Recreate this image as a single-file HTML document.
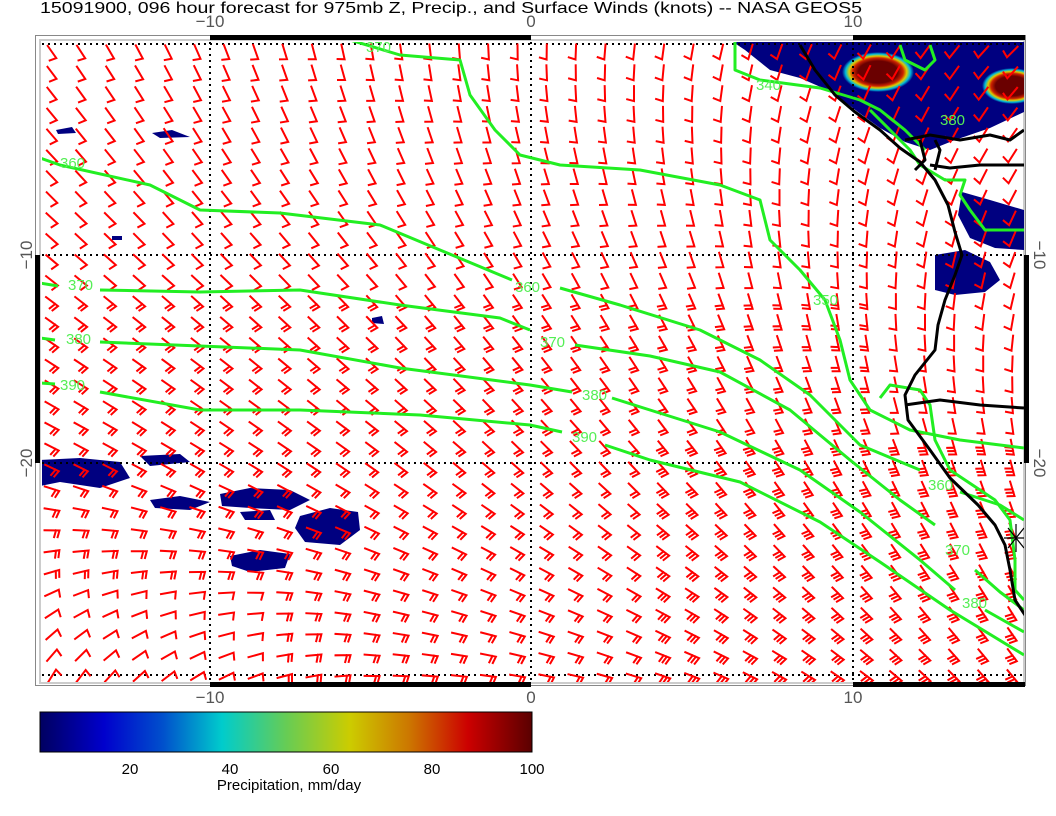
<!DOCTYPE html>
<html><head><meta charset="utf-8"><style>
html,body{margin:0;padding:0;background:#fff;width:1056px;height:816px;overflow:hidden}
svg{position:absolute;left:0;top:0}
text{font-family:"Liberation Sans",sans-serif}
</style></head><body>
<svg id="s" width="1056" height="816" viewBox="0 0 1056 816" xmlns="http://www.w3.org/2000/svg">
<defs>
<linearGradient id="cb" x1="0" x2="1" y1="0" y2="0">
<stop offset="0" stop-color="#000060"/>
<stop offset="0.13" stop-color="#0000cc"/>
<stop offset="0.25" stop-color="#0050cc"/>
<stop offset="0.37" stop-color="#00cccc"/>
<stop offset="0.50" stop-color="#66cc55"/>
<stop offset="0.63" stop-color="#cccc00"/>
<stop offset="0.75" stop-color="#cc7700"/>
<stop offset="0.87" stop-color="#cc0000"/>
<stop offset="1" stop-color="#5a0000"/>
</linearGradient>
<radialGradient id="hot" cx="0.5" cy="0.5" r="0.5">
<stop offset="0.55" stop-color="#6a0000"/>
<stop offset="0.7" stop-color="#cc2200"/>
<stop offset="0.8" stop-color="#ddcc00"/>
<stop offset="0.9" stop-color="#00bbdd"/>
<stop offset="1" stop-color="#000080"/>
</radialGradient>
<clipPath id="map"><rect x="42" y="42" width="982" height="640"/></clipPath>
</defs>
<text x="40" y="13" font-size="16" fill="#000" textLength="822" lengthAdjust="spacingAndGlyphs">15091900, 096 hour forecast for 975mb Z, Precip., and Surface Winds (knots) -- NASA GEOS5</text>

<rect x="35.5" y="35.5" width="990" height="650" fill="none" stroke="#888" stroke-width="1"/>
<rect x="40" y="40" width="984" height="643" fill="none" stroke="#ccc" stroke-width="2"/>

<g clip-path="url(#map)">
<g fill="#000080">
<path d="M730,40 L1024,40 L1024,112 L990,128 L955,140 L930,150 L905,142 L880,128 L858,112 L832,92 L800,78 L770,70 L745,50 Z"/>
<path d="M962,192 L990,200 L1024,210 L1024,250 L995,248 L970,238 L958,215 Z"/>
<path d="M935,255 L965,250 L990,262 L1000,280 L985,292 L955,295 L935,290 Z"/>
<path d="M40,460 L80,458 L120,462 L130,478 L100,488 L60,482 L40,486 Z"/>
<path d="M140,456 L180,454 L190,462 L150,466 Z"/>
<path d="M220,494 L250,488 L290,490 L310,500 L290,510 L250,508 L222,506 Z"/>
<path d="M300,516 L330,508 L358,512 L360,530 L340,545 L305,542 L295,528 Z"/>
<path d="M230,556 L260,550 L290,554 L285,568 L250,572 L232,566 Z"/>
<path d="M150,500 L180,496 L210,502 L190,510 L155,508 Z"/>
<path d="M240,512 L270,510 L275,520 L245,520 Z"/>
<path d="M56,130 L72,127 L76,133 L58,134 Z"/>
<path d="M152,133 L172,130 L190,137 L160,138 Z"/>
<path d="M372,318 L382,316 L384,324 L372,323 Z"/>
<path d="M112,236 L122,236 L122,240 L112,240 Z"/>
</g>
<ellipse cx="878" cy="72" rx="36" ry="20" fill="url(#hot)"/>
<ellipse cx="1012" cy="86" rx="30" ry="18" fill="url(#hot)"/>

<g stroke="#000" stroke-width="2" stroke-dasharray="2,4" fill="none">
<line x1="42" y1="44" x2="1024" y2="44"/>
<line x1="42" y1="255" x2="1024" y2="255"/>
<line x1="42" y1="463" x2="1024" y2="463"/>
<line x1="42" y1="675" x2="1024" y2="675"/>
<line x1="210" y1="42" x2="210" y2="682"/>
<line x1="531" y1="42" x2="531" y2="682"/>
<line x1="853" y1="42" x2="853" y2="682"/>
</g>

<g id="barbs" stroke="#ff0000" stroke-width="2" fill="none" stroke-linecap="square"></g>

<g stroke="#22ee22" stroke-width="3" fill="none" stroke-linejoin="round">
<polyline points="40,158 60,165 150,185 200,210 280,213 380,225 440,250 500,275 512,280"/>
<polyline points="560,288 620,305 700,330 760,360 810,395 860,445 920,470"/>
<polyline points="960,492 1000,505 1024,520"/>
<polyline points="40,283 58,286"/><polyline points="100,290 200,292 300,290 400,305 500,318 530,330"/>
<polyline points="575,345 650,356 720,372 790,410 850,460 900,500 935,525"/>
<polyline points="975,570 1000,592 1024,610"/>
<polyline points="40,338 55,340"/><polyline points="100,342 200,346 300,350 400,368 530,385 572,392"/>
<polyline points="612,398 650,410 720,432 800,470 860,512 920,560 955,590"/>
<polyline points="985,610 1024,632"/>
<polyline points="40,383 55,384"/><polyline points="100,392 200,410 300,410 420,415 530,425 562,432"/>
<polyline points="605,445 650,460 740,482 820,522 880,562 950,610 1024,655"/>
<polyline points="350,40 400,55 460,60 470,95 495,130 520,155 560,165 640,170 720,185 760,200 770,240 800,270 825,300 840,340 850,380 870,410 910,430 960,440 1000,445 1024,448"/>
<polyline points="735,40 735,70 760,80 790,84 820,88 860,100 880,110 905,130 925,150"/>
<polyline points="900,45 905,60 925,70 935,60 930,45"/>
<polyline points="870,110 890,130 910,150 920,165 945,180 965,180 960,195 970,210 985,230 1024,230"/>
<polyline points="880,398 890,385 920,390 930,405 935,440 950,470 980,490 995,500 1010,520 1015,560 1015,590 1024,600"/>
</g>
<g fill="#55ee55" font-size="15">
<text x="366" y="52">370</text>
<text x="756" y="90">340</text>
<text x="940" y="125">380</text>
<text x="60" y="168">360</text>
<text x="515" y="292">360</text>
<text x="68" y="290">370</text>
<text x="540" y="347">370</text>
<text x="66" y="344">380</text>
<text x="582" y="400">380</text>
<text x="60" y="390">390</text>
<text x="572" y="442">390</text>
<text x="813" y="305">350</text>
<text x="928" y="490">360</text>
<text x="945" y="555">370</text>
<text x="962" y="608">380</text>
</g>

<g stroke="#000" stroke-width="3" fill="none" stroke-linejoin="round">
<polyline points="800,45 815,70 835,95 855,112 880,130 900,148 920,162 935,180 948,205 955,232 962,255 955,275 945,300 938,325 935,350 915,375 905,395 908,420 930,450 950,478 978,505 995,525 1005,545 1010,570 1015,600 1025,615"/>
<polyline points="930,165 950,168 980,165 1024,165"/>
<polyline points="905,405 940,400 980,405 1024,408"/>
<polyline points="905,140 930,135 960,140 990,135 1010,140 1024,130"/>
<polyline points="920,140 925,160 915,170"/>
<polyline points="935,170 940,150 935,140"/>
</g>
<g stroke="#000" stroke-width="1.2"><line x1="1008" y1="528" x2="1024" y2="548"/><line x1="1008" y1="548" x2="1024" y2="528"/><line x1="1016" y1="524" x2="1016" y2="552"/><line x1="1004" y1="538" x2="1028" y2="538"/></g>
</g>

<g fill="#000">
<rect x="210" y="35" width="321" height="5"/>
<rect x="853" y="35" width="172" height="5"/>
<rect x="210" y="682" width="321" height="5"/>
<rect x="853" y="682" width="172" height="5"/>
<rect x="35" y="255" width="5" height="208"/>
<rect x="1024" y="255" width="5" height="208"/>
</g>
<g fill="#555" font-size="17" text-anchor="middle">
<text x="210" y="27">−10</text><text x="531" y="27">0</text><text x="853" y="27">10</text>
<text x="210" y="703">−10</text><text x="531" y="703">0</text><text x="853" y="703">10</text>
<text transform="translate(32,255) rotate(-90)">−10</text>
<text transform="translate(32,463) rotate(-90)">−20</text>
<text transform="translate(1034,255) rotate(90)">−10</text>
<text transform="translate(1034,463) rotate(90)">−20</text>
</g>

<rect x="40" y="712" width="492" height="40" fill="url(#cb)" stroke="#000" stroke-width="1"/>
<g fill="#000" font-size="15" text-anchor="middle">
<text x="130" y="774">20</text><text x="230" y="774">40</text><text x="331" y="774">60</text><text x="432" y="774">80</text><text x="532" y="774">100</text>
<text x="289" y="790">Precipitation, mm/day</text>
</g>
</svg>
<script>
(function(){
var g=document.getElementById('barbs');
var xs=[50,370,690,1010], ys=[50,260,470,680];
var A=[[55,80,100,135],[40,50,70,110],[25,35,50,75],[-60,0,20,50]];
function ang(x,y){
 var i=Math.min(2,Math.max(0,Math.floor((x-50)/320))), j=Math.min(2,Math.max(0,Math.floor((y-50)/210)));
 var tx=Math.max(0,Math.min(1,(x-xs[i])/320)), ty=Math.max(0,Math.min(1,(y-ys[j])/210));
 var a=A[j][i]*(1-tx)+A[j][i+1]*tx, b=A[j+1][i]*(1-tx)+A[j+1][i+1]*tx;
 return a*(1-ty)+b*ty;
}
var s='';
for(var r=0;r<31;r++){
 var y=52+r*20.8;
 for(var c=0;c<34;c++){
  var x=52+c*29.1;
  var t=ang(x,y)*Math.PI/180, hx=Math.cos(t), hy=Math.sin(t);
  var L=15, x0=x-hx*L/2, y0=y-hy*L/2, x1=x+hx*L/2, y1=y+hy*L/2;
  var ft=t+105*Math.PI/180, fx=Math.cos(ft)*7, fy=Math.sin(ft)*7;
  var n=1;
  if(y>300 && !(x>880&&y<430)) n=2;
  if(x>640 && y>440) n=3;
  if(y>590 && x<260) n=1;
  var d='M'+x0.toFixed(1)+','+y0.toFixed(1)+'L'+x1.toFixed(1)+','+y1.toFixed(1)+'l'+fx.toFixed(1)+','+fy.toFixed(1);
  for(var k=1;k<n;k++){
   var bx=x1-hx*3.5*k, by=y1-hy*3.5*k;
   d+='M'+bx.toFixed(1)+','+by.toFixed(1)+'l'+fx.toFixed(1)+','+fy.toFixed(1);
  }
  s+='<path d="'+d+'"/>';
 }
}
g.innerHTML=s;
})();
</script>
</body></html>
